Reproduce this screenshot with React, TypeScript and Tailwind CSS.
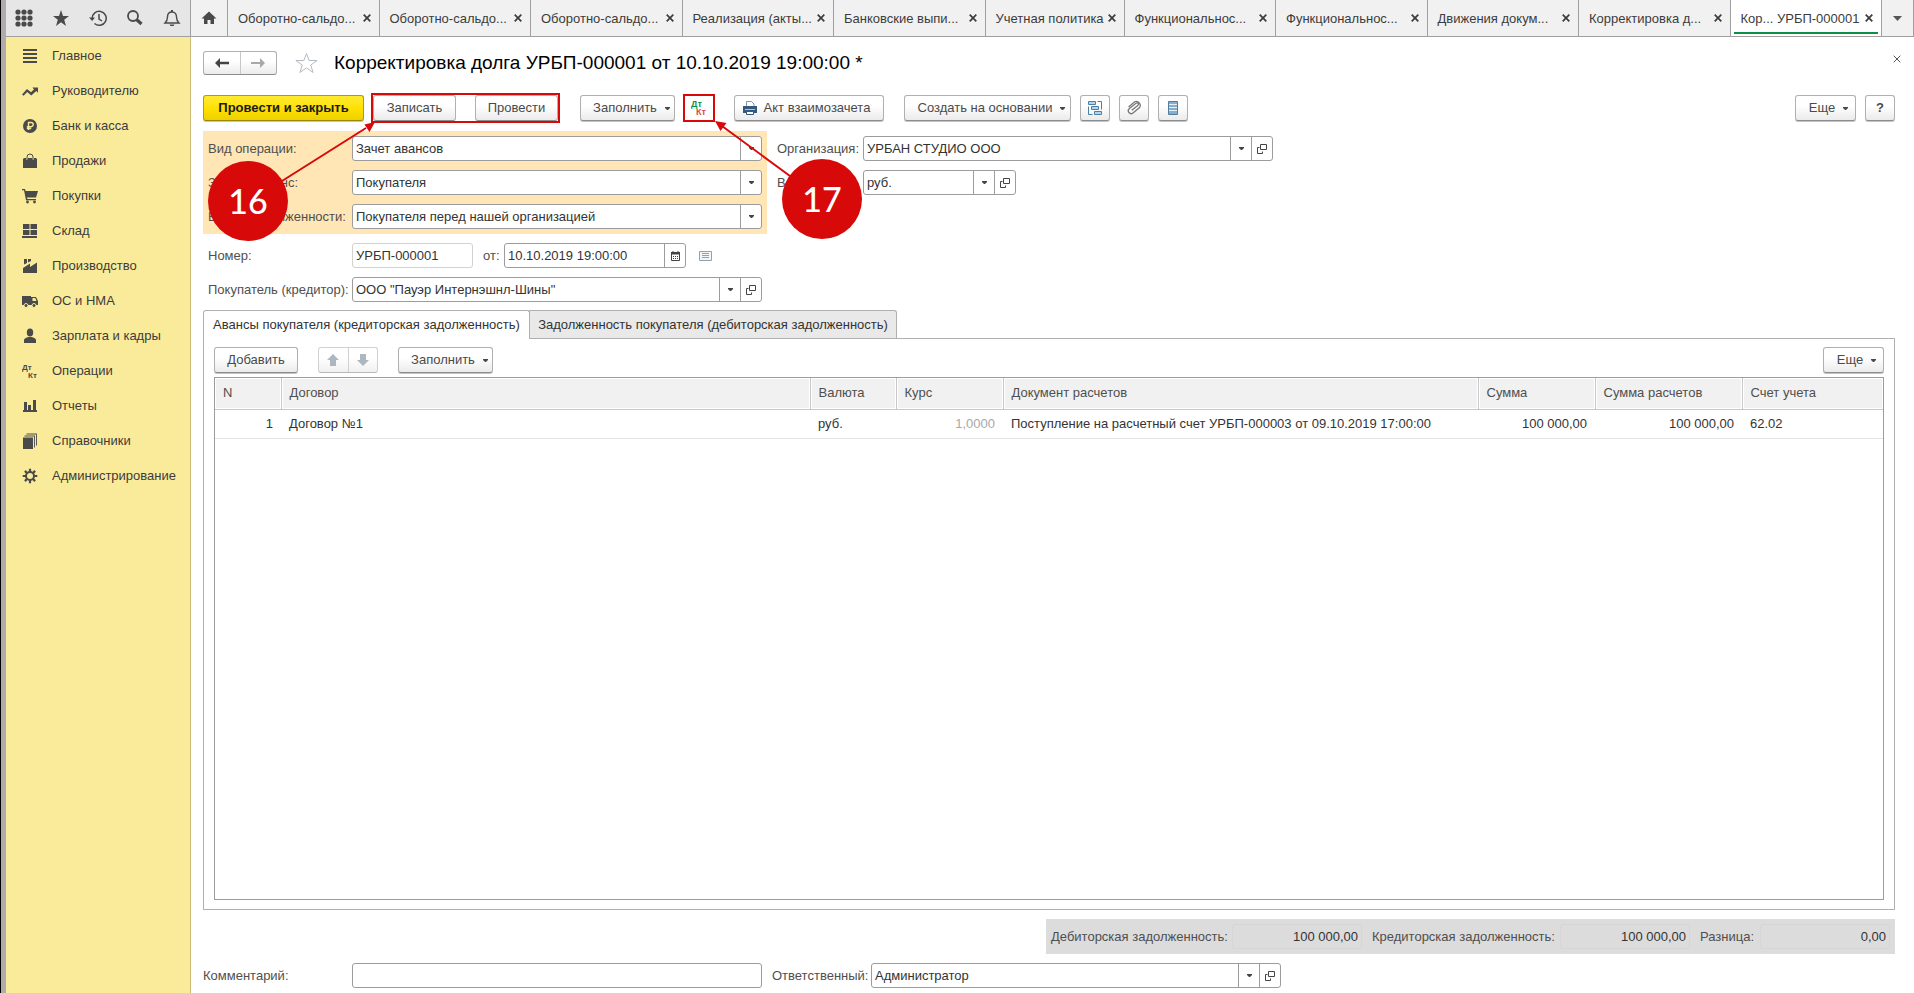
import React from "react";
import clsx from "clsx";

type IconProps = { children: React.ReactNode; size?: number; className?: string };

const Icon = ({ children, size = 16, className }: IconProps) => (
  <svg width={size} height={size} viewBox={`0 0 ${size} ${size}`} fill="currentColor" aria-hidden="true" className={clsx("shrink-0", className)}>
    {children}
  </svg>
);

const Caret = ({ className }: { className?: string }) => (
  <svg width="5" height="3" viewBox="0 0 5 3" fill="currentColor" aria-hidden="true" className={clsx("shrink-0", className)}>
    <path d="M0 0h5v1L3 3H2L0 1z" />
  </svg>
);

const Cross = ({ width = 1.7 }: { width?: number }) => (
  <svg width="8" height="8" viewBox="0 0 8 8" fill="none" stroke="currentColor" strokeWidth={width} aria-hidden="true" className="shrink-0">
    <path d="M0.7 0.7l6.6 6.6M7.3 0.7L0.7 7.3" />
  </svg>
);

const OpenIcon = () => (
  <svg width="10" height="10" viewBox="0 0 10 10" fill="none" stroke="#444" aria-hidden="true">
    <path d="M3.5 0.5h6v5h-6zM2.5 3.5h-2v6h5v-2" />
  </svg>
);

const menu = [
  { name: "Главное", icon: <path d="M1 1h14v2H1zM1 5h14v2H1zM1 9h14v2H1zM1 13h14v2H1z" /> },
  { name: "Руководителю", icon: <path d="M0 11.5L5 6l4 3.3 3-3L10.3 4.5H16v5.3l-1.8-1.7L9.3 12.4 5.2 9 1.6 12.8z" /> },
  {
    name: "Банк и касса",
    icon: (
      <>
        <circle cx="8" cy="8" r="7" />
        <path d="M6.500 12V4.500h2.600a2 2 0 0 1 0 4.200H4.800M4.800 10.500h4.400" fill="none" stroke="#faeb9b" strokeWidth="1.400" />
      </>
    ),
  },
  {
    name: "Продажи",
    icon: (
      <>
        <path d="M2 5h2v2h2V5h4v2h2V5h2v10H2z" />
        <path d="M1 5.500h3v2h1.500v-2h5v2H12v-2h3V15H1z" />
        <path d="M5 7V4a3 3 0 0 1 6 0v3" fill="none" stroke="currentColor" strokeWidth="1" />
      </>
    ),
  },
  {
    name: "Покупки",
    icon: (
      <>
        <path d="M0 1h3l.6 2H16l-2 6.500H5l.4 1.500H14v1.300H4L2 2.300H0z" />
        <circle cx="5.500" cy="14" r="1.400" />
        <circle cx="12.500" cy="14" r="1.400" />
      </>
    ),
  },
  { name: "Склад", icon: <path d="M1 1h6.500v5H1zM8.500 1H15v5H8.500zM1 7h6.500v5H1zM8.500 7H15v5H8.500zM0 13h15v2H0z" /> },
  { name: "Производство", icon: <path d="M2 1h3v4L2 6.500zM6 1h3v2L6 4.500zM1 10l7-4.500V9l7-4.500V15H1z" /> },
  {
    name: "ОС и НМА",
    icon: (
      <>
        <path d="M0 3h9v9H0zM9 4h5l2 4v4H9z" />
        <path d="M10.500 5h2.700l1.300 3h-4z" fill="#faeb9b" />
        <circle cx="4" cy="12.500" r="2" stroke="#faeb9b" />
        <circle cx="12" cy="12.500" r="2" stroke="#faeb9b" />
      </>
    ),
  },
  {
    name: "Зарплата и кадры",
    icon: (
      <>
        <ellipse cx="8" cy="4.500" rx="3.200" ry="4" />
        <path d="M2 15v-3c0-1.500 2-2.500 4.500-3h3c2.500.5 4.500 1.500 4.500 3v3z" />
      </>
    ),
  },
  {
    name: "Операции",
    icon: (
      <>
        <text x="0" y="7" fontSize="8" fontWeight="bold">Дт</text>
        <text x="6" y="15" fontSize="8" fontWeight="bold">Кт</text>
      </>
    ),
  },
  { name: "Отчеты", icon: <path d="M2 4h3v8H2zM6 7h3v5H6zM11 2h3v10h-3zM1 12h14v2H1z" /> },
  {
    name: "Справочники",
    icon: <path d="M1 4.500h10V16H1zM2.500 2.500h10.400v12h-.9V3.500H2.500zM4.500 .5h10.400v12H14v-11H4.500z" />,
  },
  {
    name: "Администрирование",
    icon: (
      <>
        <circle cx="8" cy="8" r="4" fill="none" stroke="currentColor" strokeWidth="2" />
        <path d="M8 0.700v3.300M8 12v3.300M0.700 8H4M12 8h3.300M2.900 2.900L5 5M11 11l2.100 2.100M2.900 13.100L5 11M11 5l2.100-2.100" fill="none" stroke="currentColor" strokeWidth="2.200" />
      </>
    ),
  },
];

const tabs = [
  "Оборотно-сальдо...",
  "Оборотно-сальдо...",
  "Оборотно-сальдо...",
  "Реализация (акты...",
  "Банковские выпи...",
  "Учетная политика",
  "Функциональнос...",
  "Функциональнос...",
  "Движения докум...",
  "Корректировка д...",
  "Кор... УРБП-000001",
];

const tools = [
  {
    name: "Все функции",
    icon: (
      <>
        {[3, 9, 15].map((y) => [3, 9, 15].map((x) => <circle key={`${x}-${y}`} cx={x} cy={y} r="2.600" />))}
      </>
    ),
  },
  { name: "Избранное", icon: <path d="M9 1l2 6h6l-4.800 3.700L14 17l-5-3.800L4 17l1.800-6.300L1 7h6z" /> },
  {
    name: "История",
    icon: (
      <>
        <path d="M3.200 9.500a7 7 0 1 1 2.300 5M10 5v5l3 2" fill="none" stroke="currentColor" strokeWidth="1.500" />
        <path d="M0 8.500h6L3.200 12z" />
      </>
    ),
  },
  {
    name: "Поиск",
    icon: (
      <>
        <circle cx="7" cy="7" r="5" fill="none" stroke="currentColor" strokeWidth="1.800" />
        <path d="M10.500 10.500l5 4.500" stroke="currentColor" strokeWidth="3.200" />
      </>
    ),
  },
  {
    name: "Уведомления",
    icon: (
      <>
        <path d="M2 14c2-2 2.500-3 2.500-6 0-3 1.500-5 4.500-5s4.500 2 4.500 5c0 3 .5 4 2.500 6z" fill="none" stroke="currentColor" strokeWidth="1.400" />
        <path d="M8 1h2v2H8zM6.500 15.500h5L10.500 17h-3z" />
      </>
    ),
  },
];

type ButtonProps = React.ButtonHTMLAttributes<HTMLButtonElement> & { caret?: boolean; primary?: boolean; flat?: boolean };

const Button = ({ caret, primary, flat, className, children, ...props }: ButtonProps) => (
  <button
    type="button"
    className={clsx(
      "flex h-[26px] shrink-0 items-center justify-center rounded-[3px] border bg-linear-to-b",
      primary
        ? "border-[#b39c00] border-b-[#9c8800] from-[#ffea2e] via-[#ffe100] to-[#edd000] font-bold text-[#1a1a1a]"
        : "border-[#b0b0b0] border-b-[#8c8c8c] from-white from-40% to-[#ebebeb] text-[#4a4a4a]",
      !flat && "shadow-[0_1px_0_#c4c4c4]",
      className,
    )}
    {...props}
  >
    {children}
    {caret && <Caret className="ml-2" />}
  </button>
);

type FieldProps = { id: string; value: string; open?: boolean; className?: string };

const SelectField = ({ id, value, open, className }: FieldProps) => (
  <div className={clsx("flex h-[25px] shrink-0 rounded-[3px] border border-[#9c9c9c] bg-white", className)}>
    <div className="relative min-w-0 flex-1">
      <select id={id} defaultValue={value} className="h-full w-full appearance-none pr-6 pl-[3px] text-[#333] outline-none">
        <option>{value}</option>
      </select>
      <span className="pointer-events-none absolute inset-y-0 right-0 flex w-[21px] items-center justify-center border-l border-[#9c9c9c] text-[#444]">
        <Caret />
      </span>
    </div>
    {open && (
      <button type="button" aria-label="Открыть" className="flex w-[21px] items-center justify-center border-l border-[#9c9c9c]">
        <OpenIcon />
      </button>
    )}
  </div>
);

const Label = ({ htmlFor, className, children }: React.LabelHTMLAttributes<HTMLLabelElement>) => (
  <label htmlFor={htmlFor} className={clsx("shrink-0 whitespace-nowrap text-[#4f4f4f]", className)}>
    {children}
  </label>
);

const TopBar = () => (
  <header className="flex h-[37px] shrink-0 border-b border-[#a0a0a0] bg-[#f1f1f1]">
    <div className="flex w-[185px] shrink-0 items-center justify-between border-r border-[#a0a0a0] bg-[#e6e6e6] pr-2 pl-2 text-[#4a4a4a]">
      {tools.map((tool) => (
        <button key={tool.name} type="button" aria-label={tool.name} className="flex w-[20px] justify-center">
          <Icon size={18}>{tool.icon}</Icon>
        </button>
      ))}
    </div>
    <button type="button" aria-label="Начальная страница" className="flex w-[37px] shrink-0 items-center justify-center border-r border-[#a0a0a0] text-[#4a4a4a]">
      <Icon>
        <path d="M8 1.500l7.500 7H13V14h-3.500v-4h-3v4H3V8.500H.5z" />
      </Icon>
    </button>
    {tabs.map((tab, i) => {
      const active = i === tabs.length - 1;
      return (
        <div
          key={i}
          className={clsx(
            "relative flex min-w-0 items-center justify-between border-r border-[#a0a0a0] pr-2 pl-2.5 text-[#3c3c3c]",
            tab === "Учетная политика" ? "w-[139px] shrink-0" : "flex-1",
            active && "bg-white",
          )}
        >
          <button type="button" className="pt-0.5 whitespace-nowrap">{tab}</button>
          <button type="button" aria-label="Закрыть вкладку"><Cross /></button>
          {active && <span className="absolute inset-x-[3px] bottom-[2px] h-[2px] bg-[#0a9146]" />}
        </div>
      );
    })}
    <button type="button" aria-label="Список вкладок" className="flex w-[32px] shrink-0 items-center justify-center border-r border-[#a0a0a0] text-[#555]">
      <svg width="9" height="5" viewBox="0 0 9 5" fill="currentColor"><path d="M0 0h9L4.500 5z" /></svg>
    </button>
  </header>
);

const Sidebar = () => (
  <nav className="w-[185px] shrink-0 border-r border-[#c9bd78] bg-[#faeb9b] pt-px">
    {menu.map((item) => (
      <a key={item.name} href="#" className="flex h-[35px] items-center gap-3.5 pl-4 text-[#3c3c3c]">
        <Icon className="text-[#4a4a4a]">{item.icon}</Icon>
        {item.name}
      </a>
    ))}
  </nav>
);

const Heading = () => (
  <div className="flex h-[26px] items-center">
    <div className="flex h-[24px] w-[74px] shrink-0 rounded-[3px] border border-[#b0b0b0] border-b-[#8c8c8c] bg-linear-to-b from-white from-40% to-[#ebebeb]">
      <button type="button" aria-label="Назад" className="flex flex-1 items-center justify-center border-r border-[#c8c8c8] text-[#444]">
        <Icon><path d="M1 8l5-5v3.700h9v2.600H6V13z" /></Icon>
      </button>
      <button type="button" aria-label="Вперед" className="flex flex-1 items-center justify-center text-[#a8a8a8]">
        <Icon><path d="M15 8l-5-5v4H1v2h9v4z" /></Icon>
      </button>
    </div>
    <button type="button" aria-label="В избранное" className="ml-[18px]">
      <svg width="23" height="22" viewBox="0 0 23 22" fill="none" stroke="#b4bac0" aria-hidden="true">
        <path d="M11.500 1.500l2.600 7h8l-6.400 4.600 2.400 7.400-6.600-4.600-6.600 4.600 2.400-7.400L.9 8.500h8z" />
      </svg>
    </button>
    <h1 className="ml-4 whitespace-nowrap text-[19px] text-black">Корректировка долга УРБП-000001 от 10.10.2019 19:00:00 *</h1>
    <button type="button" aria-label="Закрыть" className="mr-[-6px] mb-2 ml-auto text-[#555]"><Cross width={1} /></button>
  </div>
);

const Toolbar = () => (
  <div className="mt-[17px] flex h-[30px] items-center">
    <Button primary className="w-[161px]">Провести и закрыть</Button>
    <div className="ml-[7px] flex h-[30px] w-[189px] shrink-0 items-center justify-between border-2 border-[#d70909]">
      <Button flat className="w-[83px]">Записать</Button>
      <Button flat className="w-[83px]">Провести</Button>
    </div>
    <Button caret className="ml-5 w-[95px] pl-2">Заполнить</Button>
    <button type="button" aria-label="Движения документа" className="ml-2 flex h-[28px] w-[32px] shrink-0 items-center justify-center border-2 border-[#d70909] bg-white">
      <Icon>
        <text x="0" y="7" fontSize="9" fontWeight="bold" fill="#0a9146">Дт</text>
        <text x="5" y="15" fontSize="9" fontWeight="bold" fill="#e04848">Кт</text>
      </Icon>
    </button>
    <Button className="ml-[19px] w-[150px] gap-1.5 pr-1.5">
      <Icon>
        <path d="M4.500 7V1.500h5l2.500 2.500v3" fill="#fff" stroke="#7f93a5" />
        <path d="M1 6h14v7H1z" fill="#33597c" />
        <path d="M3 9h10v1H3z" fill="#a9c4da" />
        <path d="M4.500 11.500h7v3h-7z" fill="#fff" stroke="#33597c" />
      </Icon>
      Акт взаимозачета
    </Button>
    <Button caret className="ml-5 w-[167px] pl-2">Создать на основании</Button>
    <Button aria-label="Структура подчиненности" className="ml-[9px] w-[30px]">
      <Icon>
        <path d="M1.500 1.500h7v3h-7zM4.500 6.500h7v3h-7zM7.500 11.500h7v3h-7z" fill="#b9d4e6" stroke="#4a80a8" />
        <path d="M10.500 1.500h4v8M5.500 14.500h-4v-8" fill="none" stroke="#4a80a8" />
      </Icon>
    </Button>
    <Button aria-label="Файлы" className="ml-[9px] w-[30px]">
      <Icon>
        <path d="M6 10.500l5.500-5.500a1.300 1.300 0 0 0-2-2L3.500 9a2.700 2.700 0 0 0 4 4l6-6a4 4 0 0 0-5.500-5.300L2.500 7.500" transform="rotate(6 8 8)" fill="none" stroke="#777" strokeWidth="1.300" />
      </Icon>
    </Button>
    <Button aria-label="Реестр" className="ml-[9px] w-[30px]">
      <Icon>
        <path d="M3.500 1.500h9v13h-9z" fill="#86adc9" stroke="#4f7d9f" />
        <path d="M4 4.500h8M4 7.500h8M4 10.500h8" stroke="#e4eff6" />
      </Icon>
    </Button>
    <Button caret className="ml-auto w-[61px] pl-1.5">Еще</Button>
    <Button aria-label="Справка" className="ml-[9px] w-[30px] font-bold">?</Button>
  </div>
);

const operation = [
  { id: "kind", label: "Вид операции:", value: "Зачет авансов" },
  { id: "advance", label: "Зачесть аванс:", value: "Покупателя" },
  { id: "debt", label: "В счет задолженности:", value: "Покупателя перед нашей организацией" },
];

const Form = () => (
  <div className="mt-2 flex flex-col gap-[9px]">
    <div className="flex items-start">
      <div className="flex w-[564px] shrink-0 flex-col gap-[9px] bg-[#ffe6b4] p-[5px]">
        {operation.map((row) => (
          <div key={row.id} className="flex items-center">
            <Label htmlFor={row.id} className="w-36">{row.label}</Label>
            <SelectField id={row.id} value={row.value} className="w-[410px]" />
          </div>
        ))}
      </div>
      <div className="ml-2.5 flex flex-col gap-[9px] pt-[5px]">
        <div className="flex items-center">
          <Label htmlFor="org" className="w-[86px]">Организация:</Label>
          <SelectField id="org" value="УРБАН СТУДИО ООО" open className="w-[410px]" />
        </div>
        <div className="flex items-center">
          <Label htmlFor="currency" className="w-[86px]">Валюта:</Label>
          <SelectField id="currency" value="руб." open className="w-[153px]" />
        </div>
      </div>
    </div>
    <div className="flex items-center pl-[5px]">
      <Label htmlFor="number" className="w-36">Номер:</Label>
      <input id="number" defaultValue="УРБП-000001" className="h-[25px] w-[121px] rounded-[3px] border border-[#d2d2d2] px-[3px] text-[#333] outline-none" />
      <Label htmlFor="date" className="ml-2.5 w-[21px]">от:</Label>
      <div className="flex h-[25px] w-[182px] rounded-[3px] border border-[#9c9c9c]">
        <input id="date" defaultValue="10.10.2019 19:00:00" className="min-w-0 flex-1 px-[3px] text-[#333] outline-none" />
        <button type="button" aria-label="Выбрать дату" className="flex w-[21px] items-center justify-center border-l border-[#9c9c9c]">
          <svg width="9" height="10" viewBox="0 0 9 10" aria-hidden="true">
            <path d="M0.500 1.500h8v8h-8z" fill="#fff" stroke="#444" />
            <path d="M0 1h9v2.500H0zM1.500 0h1v1h-1zM6.500 0h1v1h-1zM2 5h1v1H2zM4 5h1v1H4zM6 5h1v1H6zM2 7h1v1H2zM4 7h1v1H4zM6 7h1v1H6z" fill="#444" />
          </svg>
        </button>
      </div>
      <svg width="13" height="10" viewBox="0 0 13 10" className="ml-[13px]" aria-hidden="true">
        <path d="M.5.5h12v9H.5z" fill="#f2f5f8" stroke="#8fa3b5" />
        <path d="M3 2.500h7M3 4.500h7M3 6.500h7" stroke="#8fa3b5" />
      </svg>
    </div>
    <div className="flex items-center pl-[5px]">
      <Label htmlFor="buyer" className="w-36">Покупатель (кредитор):</Label>
      <SelectField id="buyer" value={'ООО "Пауэр Интернэшнл-Шины"'} open className="w-[410px]" />
    </div>
  </div>
);

const columns = [
  { name: "N", value: "1", width: "w-[66px]", right: true },
  { name: "Договор", value: "Договор №1", width: "w-[529px]" },
  { name: "Валюта", value: "руб.", width: "w-[86px]" },
  { name: "Курс", value: "1,0000", width: "w-[107px]", right: true, muted: true },
  { name: "Документ расчетов", value: "Поступление на расчетный счет УРБП-000003 от 09.10.2019 17:00:00", width: "w-[475px]" },
  { name: "Сумма", value: "100 000,00", width: "w-[117px]", right: true },
  { name: "Сумма расчетов", value: "100 000,00", width: "w-[147px]", right: true },
  { name: "Счет учета", value: "62.02", width: "" },
];

const Advances = () => (
  <section className="mt-2 flex flex-1 flex-col">
    <div className="flex h-[28px] text-[#333]" role="tablist">
      <button type="button" role="tab" aria-selected="true" className="z-10 mb-[-1px] w-[327px] rounded-t-[3px] border border-b-0 border-[#b0b0b0] bg-white">
        Авансы покупателя (кредиторская задолженность)
      </button>
      <button type="button" role="tab" aria-selected="false" className="ml-[-1px] w-[368px] rounded-tr-[3px] border border-b-0 border-[#b0b0b0] bg-[#e9e9e9]">
        Задолженность покупателя (дебиторская задолженность)
      </button>
    </div>
    <div className="flex flex-1 flex-col border border-[#b0b0b0] px-2.5 pt-2 pb-[9px]">
      <div className="flex">
        <Button className="w-[84px]">Добавить</Button>
        <div className="ml-5 flex h-[26px] w-[60px] rounded-[3px] border border-[#d0d0d0] border-b-[#b8b8b8] bg-linear-to-b from-white from-40% to-[#f0f0f0] text-[#adb7bf]">
          <button type="button" aria-label="Переместить вверх" className="flex flex-1 items-center justify-center border-r border-[#d0d0d0]">
            <Icon><path d="M8 2l6 6h-3v6H5V8H2z" /></Icon>
          </button>
          <button type="button" aria-label="Переместить вниз" className="flex flex-1 items-center justify-center">
            <Icon><path d="M8 14L2 8h3V2h6v6h3z" /></Icon>
          </button>
        </div>
        <Button caret className="ml-5 w-[95px] pl-2">Заполнить</Button>
        <Button caret className="ml-auto w-[61px] pl-1.5">Еще</Button>
      </div>
      <div className="mt-1 flex-1 border border-[#9c9c9c]">
        <table className="w-full table-fixed border-collapse">
          <thead>
            <tr className="h-[31px] border-b border-[#c8c8c8]">
              {columns.map((c) => (
                <th
                  key={c.name}
                  className={clsx("border-r border-[#c8c8c8] bg-[#f1f1f1] px-2 text-left font-normal whitespace-nowrap text-[#4f4f4f] shadow-[inset_0_0_0_1px_#fff] last:border-r-0", c.width)}
                >
                  {c.name}
                </th>
              ))}
            </tr>
          </thead>
          <tbody>
            <tr className="h-[29px] border-b border-[#e4e4e4]">
              {columns.map((c) => (
                <td key={c.name} className={clsx("px-2 whitespace-nowrap", c.right && "text-right", c.muted ? "text-[#a8a8a8]" : "text-[#333]")}>
                  {c.value}
                </td>
              ))}
            </tr>
          </tbody>
        </table>
      </div>
    </div>
  </section>
);

const totals = [
  { id: "debit", label: "Дебиторская задолженность:", value: "100 000,00", width: "w-[181px]" },
  { id: "credit", label: "Кредиторская задолженность:", value: "100 000,00", width: "w-[188px]" },
  { id: "diff", label: "Разница:", value: "0,00", width: "w-[60px]" },
];

const Totals = () => (
  <div className="mt-[9px] flex h-[35px] shrink-0 items-center gap-2.5 self-end bg-[#dcdcdc] px-[5px]">
    {totals.map((t) => (
      <div key={t.id} className="flex items-center">
        <Label htmlFor={t.id} className={t.width}>{t.label}</Label>
        <input id={t.id} readOnly value={t.value} className="h-[25px] w-[130px] rounded-[3px] border border-[#d6d6d6] px-[3px] text-right text-[#333] outline-none" />
      </div>
    ))}
  </div>
);

const Bottom = () => (
  <div className="mt-[9px] mb-[5px] flex items-center">
    <Label htmlFor="comment" className="w-[149px]">Комментарий:</Label>
    <input id="comment" className="h-[25px] w-[410px] rounded-[3px] border border-[#9c9c9c] px-[3px] outline-none" />
    <Label htmlFor="responsible" className="ml-2.5 w-[99px]">Ответственный:</Label>
    <SelectField id="responsible" value="Администратор" open className="w-[410px]" />
  </div>
);

// numbered callouts that point at the toolbar
const Callouts = () => (
  <svg width="900" height="260" viewBox="0 0 900 260" className="pointer-events-none absolute top-0 left-0 z-20" fill="#d70909" aria-hidden="true">
    <path d="M282 181L366 128M790 176L722 126" stroke="#d70909" strokeWidth="2" />
    <path d="M375 122l-5.500 10-5-7.600zM715 121l11.500 2-6 8z" />
    <circle cx="248" cy="201" r="40" />
    <circle cx="822" cy="199" r="40" />
    <g fill="#fff" fontFamily="Lato, sans-serif" fontSize="34" fontWeight="500" textAnchor="middle">
      <text x="248" y="214">16</text>
      <text x="822" y="212">17</text>
    </g>
  </svg>
);

export default function App() {
  return (
    <div className="relative flex min-h-screen bg-white font-['Liberation_Sans',Arial,sans-serif] text-[13px] leading-4">
      <div className="w-[6px] shrink-0 border-l border-black bg-[#b0acac]" />
      <div className="flex min-w-0 flex-1 flex-col">
        <TopBar />
        <div className="flex flex-1">
          <Sidebar />
          <main className="flex min-w-0 flex-1 flex-col pt-[13px] pr-[19px] pl-3">
            <Heading />
            <Toolbar />
            <Form />
            <Advances />
            <Totals />
            <Bottom />
          </main>
        </div>
      </div>
      <Callouts />
    </div>
  );
}
